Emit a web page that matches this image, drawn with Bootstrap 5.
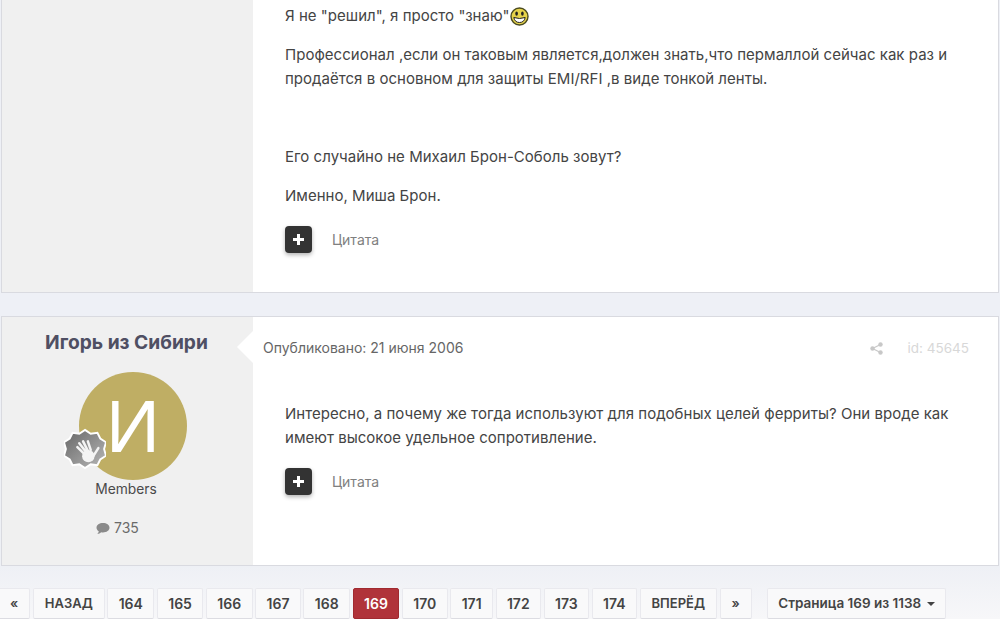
<!DOCTYPE html>
<html lang="ru">
<head>
    <meta charset="UTF-8">
    <title>Страница 169</title>
    <link href="https://cdn.jsdelivr.net/npm/bootstrap@5.3.0/dist/css/bootstrap.min.css" rel="stylesheet">
    <style>
        html, body { height: 619px; overflow: hidden; }
        body {
            background: linear-gradient(#eef0f6 320px, #eef0f5 566px, #f7f7f9 619px);
            font-family: Inter, "Noto Sans", sans-serif;
            color: #444;
            font-size: 15px;
            padding: 0 1px 0 1px;
        }
        .post-box {
            display: flex;
            background: #fff;
            border: 1px solid #d9dae0;
        }
        .post-first { height: 293px; border-top: 0; margin-bottom: 23px; }
        .post-second { height: 250px; margin-bottom: 22px; }
        .post-side {
            width: 251px;
            flex: none;
            background: #f0f0f0;
            position: relative;
            text-align: center;
            padding-top: 12px;
        }
        .post-second .post-side::after {
            content: "";
            position: absolute;
            right: 0;
            top: 14px;
            border: 16px solid transparent;
            border-right-color: #fff;
            border-left-width: 0;
        }
        .post-main { flex: 1; min-width: 0; padding: 0 0 0 32px; line-height: 24px; }
        .post-first .post-main { padding-top: 4px; }
        .post-main p { margin: 0 0 15px; letter-spacing: .025px; }
        .post-main p.para-spaced { margin-top: 54px; }
        .author-name { font-size: 19.2px; font-weight: 700; color: #4f4f63; line-height: 26px; margin: 0; padding-right: 2px; }
        .avatar-wrap { position: relative; width: 108px; height: 108px; margin: 17px 0 0 77px; }
        .avatar-circle {
            width: 108px; height: 108px; border-radius: 50%;
            background: #bfae64; color: #fff;
            font-size: 75px; line-height: 108px; font-weight: 300;
            font-family: "Liberation Sans", sans-serif;
        }
        .rank-badge { position: absolute; left: -15px; top: 56px; width: 42px; height: 42px; }
        .group-name { font-size: 13.800px; color: #4a4a4a; line-height: 18px; padding-right: 3px; }
        .post-count { font-size: 14px; color: #6a6a6a; margin-top: 21px; line-height: 18px; padding-right: 20px; }
        .post-count svg { vertical-align: -2px; }
        .post-meta { display: flex; align-items: center; margin: 21px 0 0 -22px; font-size: 14px; color: #666; line-height: 20px; padding-right: 29px; }
        .post-meta .meta-id { color: #d8d8d8; margin-left: 25px; font-size: 13.500px; }
        .post-body-second { padding-top: 44px; }
        .rep-row { display: flex; align-items: center; margin-top: 18px; }
        .plus-btn {
            width: 27px; height: 27px; border-radius: 4px;
            background: #333; display: flex; align-items: center; justify-content: center;
            box-shadow: 0 2px 4px rgba(0,0,0,.3);
        }
        .quote-link { color: #808080; font-size: 14px; margin-left: 20px; }
        .emoji-icon { vertical-align: -5px; margin-left: -4px; }
        .pager-row { display: flex; gap: 2.500px; align-items: stretch; margin-left: -3px; }
        .page-cell {
            height: 31px;
            background: #f9f9fa;
            border: 1px solid #e9e9ee;
            border-bottom-color: #dcdce2;
            border-radius: 2px;
            display: flex; align-items: center; justify-content: center;
            font-size: 13px; font-weight: 600; color: #444;
            padding: 0 11px;
        }
        .page-num { font-size: 14px; padding: 0 10.450px; }
        .page-now { background: #b0333a; border-color: #a02a30; color: #fff; }
        .page-jump { margin-left: 13px; gap: 6px; font-size: 13.500px; padding: 0 10px; }
        .caret-down { border: 4px solid transparent; border-top-color: #444; border-bottom-width: 0; }
    </style>
</head>
<body>
    <div class="post-box post-first">
        <div class="post-side"></div>
        <div class="post-main">
            <p>Я не "решил", я просто "знаю"
                <svg class="emoji-icon" width="19" height="19" viewBox="0 0 19 19"><circle cx="9.500" cy="9.500" r="8.500" fill="#e6d34a" stroke="#4b4b20" stroke-width="1.400"/><ellipse cx="6.600" cy="6.600" rx="1.300" ry="2.200" fill="#222"/><ellipse cx="12.400" cy="6.600" rx="1.300" ry="2.200" fill="#222"/><path d="M3.800 10.500q5.700 2 11.400 0q-1 5-5.700 5t-5.700-5z" fill="#fff" stroke="#222"/></svg>
            </p>
            <p>Профессионал ,если он таковым является,должен знать,что пермаллой сейчас как раз и<br>продаётся в основном для защиты EMI/RFI ,в виде тонкой ленты.</p>
            <p class="para-spaced">Его случайно не Михаил Брон-Соболь зовут?</p>
            <p>Именно, Миша Брон.</p>
            <div class="rep-row">
                <div class="plus-btn"><svg width="11" height="11" viewBox="0 0 11 11"><path d="M4 0h3v4h4v3H7v4H4V7H0V4h4z" fill="#fff"/></svg></div>
                <span class="quote-link">Цитата</span>
            </div>
        </div>
    </div>

    <div class="post-box post-second">
        <div class="post-side">
            <h3 class="author-name">Игорь из Сибири</h3>
            <div class="avatar-wrap">
                <div class="avatar-circle">И</div>
                <svg class="rank-badge" viewBox="0 0 44 44">
                    <defs><linearGradient id="rankFill" x1="0" y1="0" x2="1" y2="1"><stop offset="0" stop-color="#666"/><stop offset="1" stop-color="#b8b8b8"/></linearGradient></defs>
                    <path d="M22 2l6 4 7-1 3 6 6 4-2 7 2 7-6 4-3 6-7-1-6 4-6-4-7 1-3-6-6-4 2-7-2-7 6-4 3-6 7 1z" fill="url(#rankFill)" stroke="#fff" stroke-width="2"/>
                    <g stroke="#f4f4f4" stroke-width="2.600" stroke-linecap="round"><path d="M22 28l-8-8M23 25l-7-9M25 24l-5-10M28 23l-3-9M31 29l5-8"/></g>
                    <circle cx="25.500" cy="29.500" r="6.500" fill="#f4f4f4"/>
                </svg>
            </div>
            <div class="group-name">Members</div>
            <div class="post-count">
                <svg width="14" height="13" viewBox="0 0 14 13"><path d="M7 1c3.600 0 6.500 2.100 6.500 4.700S10.600 10.400 7 10.400c-.7 0-1.300-.1-1.900-.2-1 .9-2.300 1.600-3.800 1.800.8-.8 1.300-1.700 1.500-2.700C1.500 8.500.5 7.200.5 5.700.5 3.100 3.400 1 7 1z" fill="#8a8a8a"/></svg>
                735
            </div>
        </div>
        <div class="post-main">
            <div class="post-meta">
                <span>Опубликовано: 21 июня 2006</span>
                <svg class="ms-auto" width="13" height="13" viewBox="0 0 13 13"><circle cx="10.500" cy="2.500" r="2.200" fill="#c8c8c8"/><circle cx="2.500" cy="6.500" r="2.200" fill="#c8c8c8"/><circle cx="10.500" cy="10.500" r="2.200" fill="#c8c8c8"/><path d="M10.500 2.500l-8 4 8 4" fill="none" stroke="#c8c8c8" stroke-width="1.200"/></svg>
                <span class="meta-id">id: 45645</span>
            </div>
            <div class="post-body-second">
                <p>Интересно, а почему же тогда используют для подобных целей ферриты? Они вроде как<br>имеют высокое удельное сопротивление.</p>
                <div class="rep-row">
                    <div class="plus-btn"><svg width="11" height="11" viewBox="0 0 11 11"><path d="M4 0h3v4h4v3H7v4H4V7H0V4h4z" fill="#fff"/></svg></div>
                    <span class="quote-link">Цитата</span>
                </div>
            </div>
        </div>
    </div>

    <div class="pager-row">
        <div class="page-cell">«</div>
        <div class="page-cell">НАЗАД</div>
        <div class="page-cell page-num">164</div>
        <div class="page-cell page-num">165</div>
        <div class="page-cell page-num">166</div>
        <div class="page-cell page-num">167</div>
        <div class="page-cell page-num">168</div>
        <div class="page-cell page-num page-now">169</div>
        <div class="page-cell page-num">170</div>
        <div class="page-cell page-num">171</div>
        <div class="page-cell page-num">172</div>
        <div class="page-cell page-num">173</div>
        <div class="page-cell page-num">174</div>
        <div class="page-cell">ВПЕРЁД</div>
        <div class="page-cell">»</div>
        <div class="page-cell page-jump">Страница 169 из 1138 <span class="caret-down"></span></div>
    </div>
    <script src="https://cdn.jsdelivr.net/npm/bootstrap@5.3.0/dist/js/bootstrap.bundle.min.js"></script>
</body>
</html>
